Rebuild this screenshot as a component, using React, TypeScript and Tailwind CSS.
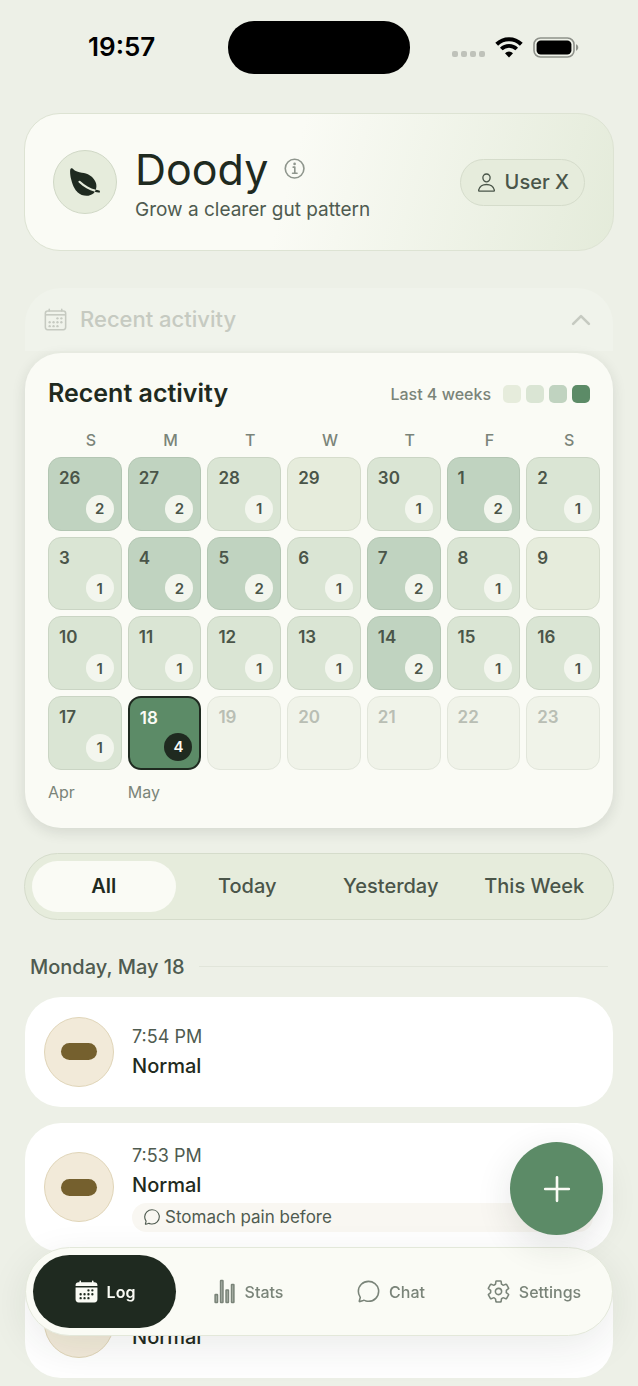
import clsx from 'clsx';
import {
  IoAdd,
  IoCalendar,
  IoCalendarOutline,
  IoChatbubbleOutline,
  IoChevronUp,
  IoInformationCircleOutline,
  IoLeaf,
  IoPersonOutline,
  IoSettingsOutline,
  IoStatsChartOutline,
} from 'react-icons/io5';

type Day = { day: number; count: number; future?: boolean; today?: boolean };

const days: Day[] = [
  { day: 26, count: 2 },
  { day: 27, count: 2 },
  { day: 28, count: 1 },
  { day: 29, count: 0 },
  { day: 30, count: 1 },
  { day: 1, count: 2 },
  { day: 2, count: 1 },
  { day: 3, count: 1 },
  { day: 4, count: 2 },
  { day: 5, count: 2 },
  { day: 6, count: 1 },
  { day: 7, count: 2 },
  { day: 8, count: 1 },
  { day: 9, count: 0 },
  { day: 10, count: 1 },
  { day: 11, count: 1 },
  { day: 12, count: 1 },
  { day: 13, count: 1 },
  { day: 14, count: 2 },
  { day: 15, count: 1 },
  { day: 16, count: 1 },
  { day: 17, count: 1 },
  { day: 18, count: 4, today: true },
  { day: 19, count: 0, future: true },
  { day: 20, count: 0, future: true },
  { day: 21, count: 0, future: true },
  { day: 22, count: 0, future: true },
  { day: 23, count: 0, future: true },
];

const weekdays = ['S', 'M', 'T', 'W', 'T', 'F', 'S'];
const filters = ['All', 'Today', 'Yesterday', 'This Week'];
const legend = ['bg-[#e6ecdc]', 'bg-[#dae5d4]', 'bg-[#c0d3c0]', 'bg-[#5c8b67]'];

const entries = [
  { time: '7:54 PM', kind: 'Normal', note: '' },
  { time: '7:53 PM', kind: 'Normal', note: 'Stomach pain before' },
  { time: '7:52 PM', kind: 'Normal', note: '' },
];

const tabs = [
  { label: 'Log', icon: IoCalendar },
  { label: 'Stats', icon: IoStatsChartOutline },
  { label: 'Chat', icon: IoChatbubbleOutline },
  { label: 'Settings', icon: IoSettingsOutline },
];

function StatusBar() {
  return (
    <div className="grid h-[94px] grid-cols-[1fr_182px_1fr] items-center text-black">
      <div className="pl-[88px] text-[26px] leading-8 font-semibold">19:57</div>
      <div className="h-[53px] rounded-[26px] bg-black" />
      <div className="flex items-center justify-end gap-[10px] pr-[59px]">
        <div className="flex gap-[3px] pt-[14px]">
          {[0, 1, 2, 3].map((i) => (
            <span key={i} className="size-[6px] rounded-[2px] bg-[#bfc2ba]" />
          ))}
        </div>
        <svg className="h-[21px] w-[28px]" viewBox="0 0 28 21" fill="none" stroke="currentColor">
          <path d="M1.7 7.3a17.6 17.6 0 0 1 24.6 0" strokeWidth="4" />
          <path d="M6.3 12a11 11 0 0 1 15.4 0" strokeWidth="3.8" />
          <path d="M14 20.5l-4-4.3a5.8 5.8 0 0 1 8 0z" fill="currentColor" stroke="none" />
        </svg>
        <svg className="h-[21px] w-[46px]" viewBox="0 0 46 21">
          <rect x="1" y="1" width="40" height="19" rx="6.5" fill="none" stroke="#8f928b" strokeWidth="1.6" />
          <rect x="3.6" y="3.4" width="34.8" height="14.2" rx="4.2" fill="currentColor" />
          <path d="M43 7.3c3 1 3 5.4 0 6.4z" fill="#8f928b" />
        </svg>
      </div>
    </div>
  );
}

function Header() {
  return (
    <header className="flex h-[138px] items-center gap-[18px] rounded-[36px] border border-[#dde3d3] bg-linear-[105deg,#fafbf5_45%,#e4ebda_100%] px-[28px]">
      <div className="flex size-[64px] shrink-0 items-center justify-center rounded-full border border-[#d0d8c6] bg-[#e6ecdc] text-[#1f2a20]">
        <IoLeaf className="size-[34px]" />
      </div>
      <div className="grow">
        <div className="flex items-center gap-[14px]">
          <h1 className="text-[43px] leading-[56px] text-[#1f2a20]">Doody</h1>
          <button type="button" aria-label="About" className="text-[#8f968d]">
            <IoInformationCircleOutline className="size-[26px]" />
          </button>
        </div>
        <p className="text-[19px] leading-[26px] text-[#4f5b50]">Grow a clearer gut pattern</p>
      </div>
      <button
        type="button"
        className="flex h-[47px] items-center gap-2 rounded-full border border-[#d5dccb] bg-[#e6ecdc] px-[15px] text-[20px] font-medium text-[#4a5549]"
      >
        <IoPersonOutline className="size-[21px]" />
        User X
      </button>
    </header>
  );
}

function DayCell({ day, count, future, today }: Day) {
  return (
    <button
      type="button"
      disabled={future}
      className={clsx(
        'flex aspect-square flex-col justify-between rounded-[13px] pt-2 pr-[7px] pb-[7px] pl-[10px] text-left text-[17px] leading-6 font-semibold',
        today && 'border-2 border-[#1f2a20] bg-[#5c8b67] text-[#fafbf5]',
        !today && 'border',
        future && 'border-[#e2e6db] bg-[#f0f3e9] text-[#b9beb4]',
        !today && !future && 'text-[#4a5549]',
        !today && !future && count === 0 && 'border-[#d6ddcc] bg-[#e6ecdc]',
        count === 1 && 'border-[#cad5c4] bg-[#dae5d4]',
        count === 2 && 'border-[#b3c6b3] bg-[#c0d3c0]'
      )}
    >
      {day}
      {count > 0 && (
        <span
          className={clsx(
            'flex size-[28px] items-center justify-center self-end rounded-full text-[15px] leading-none',
            today ? 'bg-[#1f2a20]' : 'bg-[#f3f6ee]'
          )}
        >
          {count}
        </span>
      )}
    </button>
  );
}

function Activity() {
  return (
    <section className="mx-px mt-[37px]">
      <button
        type="button"
        className="flex h-[63px] w-full items-center gap-3 rounded-t-[36px] bg-[#f0f3eb] px-[18px] text-[22px] font-medium text-[#c6cac1]"
      >
        <IoCalendarOutline className="size-[25px]" />
        <span className="grow text-left">Recent activity</span>
        <IoChevronUp className="size-[28px]" />
      </button>
      <div className="mt-[2px] rounded-[36px] bg-[#fafbf5] pt-[23px] pr-[13px] pb-[24px] pl-[23px] shadow-[0_4px_14px_rgba(31,42,32,0.12)]">
        <div className="flex h-9 items-center pr-[10px]">
          <h2 className="grow text-[25px] font-semibold text-[#1f2a20]">Recent activity</h2>
          <span className="mr-3 text-[16px] font-medium text-[#7a8479]">Last 4 weeks</span>
          <div className="flex gap-[5px]">
            {legend.map((color) => (
              <span key={color} className={clsx('size-[18px] rounded-[5px]', color)} />
            ))}
          </div>
        </div>
        <div className="mt-4 grid grid-cols-7 gap-x-[6px] text-center text-[16px] leading-6 font-medium text-[#7a8479]">
          {weekdays.map((name, i) => (
            <span key={i} className="pl-3">
              {name}
            </span>
          ))}
        </div>
        <div className="mt-[5px] grid grid-cols-7 gap-[6px]">
          {days.map((d) => (
            <DayCell key={d.day} {...d} />
          ))}
        </div>
        <div className="mt-[10px] grid grid-cols-7 gap-x-[6px] text-[16px] leading-6 text-[#7a8479]">
          <span>Apr</span>
          <span>May</span>
        </div>
      </div>
    </section>
  );
}

function Filters() {
  return (
    <div className="mt-[25px] grid h-[67px] grid-cols-4 rounded-full border border-[#d5dccb] bg-[#e6ecdc] p-[7px]">
      {filters.map((name, i) => (
        <button
          key={name}
          type="button"
          className={clsx(
            'rounded-full text-[20px] whitespace-nowrap',
            i === 0 ? 'bg-[#fafbf5] font-semibold text-[#1f2a20]' : 'font-medium text-[#4a5549]'
          )}
        >
          {name}
        </button>
      ))}
    </div>
  );
}

function Entry({ time, kind, note }: { time: string; kind: string; note: string }) {
  return (
    <li className="flex items-center gap-[18px] rounded-[36px] bg-white py-5 pr-5 pl-[19px]">
      <div className="flex size-[70px] shrink-0 items-center justify-center rounded-full border border-[#e0d5b8] bg-[#f2ead9]">
        <span className="h-[17px] w-[36px] rounded-full bg-[#75602e]" />
      </div>
      <div className="grow">
        <p className="text-[18px] leading-[26px] text-[#4f5b50]">{time}</p>
        <p className="mt-[2px] text-[20px] leading-7 font-medium text-[#1f2a20]">{kind}</p>
        {note && (
          <p className="mt-1 flex h-[29px] items-center gap-1 rounded-full bg-[#f9f7f2] px-[11px] text-[17px] text-[#4f5b50]">
            <IoChatbubbleOutline className="size-[18px]" />
            {note}
          </p>
        )}
      </div>
    </li>
  );
}

function TabBar() {
  return (
    <div className="fixed inset-x-[25px] bottom-[50px]">
      <button
        type="button"
        aria-label="Add entry"
        className="absolute right-[10px] bottom-full mb-3 flex size-[93px] items-center justify-center rounded-full bg-[#5c8b67] text-[#fafbf5] shadow-[0_10px_36px_rgba(31,42,32,0.12)]"
      >
        <IoAdd className="size-[42px]" />
      </button>
      <nav className="grid h-[89px] grid-cols-4 rounded-full border border-[#e3e8da] bg-[#fafbf5] p-[7px] shadow-[0_12px_40px_rgba(31,42,32,0.09)]">
        {tabs.map(({ label, icon: Icon }, i) => (
          <a
            key={label}
            href="#"
            className={clsx(
              'flex items-center justify-center gap-2 rounded-full text-[16px]',
              i === 0 ? 'bg-[#1f2a20] font-semibold text-[#fafbf5]' : 'font-medium text-[#7a8479]'
            )}
          >
            <Icon className={clsx('size-[25px]', label === 'Stats' && '[&_rect]:fill-[#b4bbb1]')} />
            {label}
          </a>
        ))}
      </nav>
    </div>
  );
}

export default function App() {
  return (
    <div className="min-h-screen bg-[#edf0e7] font-['Inter',sans-serif]">
      <StatusBar />
      <main className="px-6 pt-[19px]">
        <Header />
        <Activity />
        <Filters />
        <div className="mt-[33px] flex items-center gap-[14px] px-[6px]">
          <h3 className="text-[20px] leading-7 font-medium text-[#4f5b50]">Monday, May 18</h3>
          <div className="h-px grow bg-[#e1e5da]" />
        </div>
        <ul className="mx-px mt-4 space-y-4">
          {entries.map((entry) => (
            <Entry key={entry.time} {...entry} />
          ))}
        </ul>
      </main>
      <TabBar />
    </div>
  );
}
